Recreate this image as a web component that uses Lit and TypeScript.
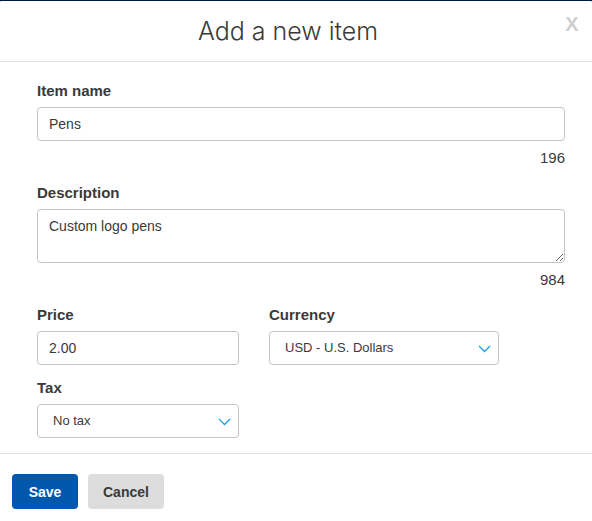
import { LitElement, html, css } from "lit";
import { customElement, state } from "lit/decorators.js";

const NAME_LIMIT = 200;
const DESCRIPTION_LIMIT = 1000;

@customElement("app-root")
export class AppRoot extends LitElement {
  static styles = css`
    :host {
      display: block;
      min-height: 100vh;
      box-sizing: border-box;
      padding-top: 1px;
      background: linear-gradient(#001a3d 8px, #ffffff 8px);
      color: #3a3a3a;
      font-family: "Liberation Sans", Arial, Helvetica, sans-serif;
    }
    * {
      box-sizing: border-box;
    }
    .dialog {
      background: #ffffff;
      border-radius: 1px;
    }
    .header {
      position: relative;
      padding: 14px 56px 14px 40px;
      border-bottom: 1px solid #e0e0e0;
    }
    .title {
      margin: 0;
      font-family: Inter, "Liberation Sans", Arial, sans-serif;
      font-size: 25px;
      line-height: 32px;
      font-weight: 300;
      text-align: center;
    }
    .close {
      position: absolute;
      top: 8px;
      right: 8px;
      width: 24px;
      height: 30px;
      padding: 0;
      border: 0;
      background: none;
      color: #cfcfcf;
      font: bold 20px/30px "Liberation Sans", Arial, sans-serif;
      cursor: pointer;
    }
    .body {
      display: grid;
      grid-template-columns: 202fr 230fr 36fr;
      column-gap: 30px;
      padding: 19px 27px 15px 37px;
    }
    .field {
      display: flex;
      flex-direction: column;
      min-width: 0;
      margin-bottom: 13px;
    }
    .wide {
      grid-column: 1 / -1;
      margin-bottom: 15px;
    }
    .last {
      grid-column: 1;
      margin-bottom: 0;
    }
    .label {
      margin-bottom: 6px;
      font-size: 15px;
      line-height: 20px;
      font-weight: 700;
    }
    .control {
      display: block;
      width: 100%;
      height: 34px;
      margin: 0;
      padding: 0 11px;
      border: 1px solid #c4c4c4;
      border-radius: 4px;
      background: #ffffff;
      color: inherit;
      font-family: inherit;
      font-size: 14px;
      line-height: 20px;
      outline: none;
    }
    .control:focus {
      border-color: #009cde;
    }
    .area {
      height: 54px;
      padding: 6px 11px;
      resize: vertical;
    }
    .count {
      margin-top: 7px;
      font-size: 15px;
      line-height: 20px;
      text-align: right;
    }
    .picker {
      display: grid;
      align-items: center;
    }
    .picker > * {
      grid-area: 1 / 1;
    }
    .select {
      appearance: none;
      padding: 0 32px 0 15px;
      font-size: 13px;
      font-weight: 500;
    }
    .chevron {
      justify-self: end;
      margin-right: 8px;
      pointer-events: none;
    }
    .footer {
      display: flex;
      gap: 10px;
      padding: 20px 12px 12px;
      border-top: 1px solid #e0e0e0;
    }
    .button {
      min-width: 66px;
      height: 35px;
      padding: 0 15px;
      border: 0;
      border-radius: 4px;
      background: #dddddd;
      color: #3a3a3a;
      font: bold 14px/20px "Liberation Sans", Arial, sans-serif;
      cursor: pointer;
    }
    .primary {
      background: #0058ad;
      color: #ffffff;
    }
  `;

  @state() private name = "Pens";
  @state() private description = "Custom logo pens";

  private chevron() {
    return html`<svg class="chevron" width="14" height="12" viewBox="0 0 14 12" fill="none" aria-hidden="true">
      <path d="M2 4 L7.5 9.5 L13 4" stroke="#1a9fe3" stroke-width="1.3" />
    </svg>`;
  }

  render() {
    return html`
      <form class="dialog" role="dialog" aria-labelledby="title" @submit=${(e: Event) => e.preventDefault()}>
        <header class="header">
          <h1 class="title" id="title">Add a new item</h1>
          <button class="close" type="button" aria-label="Close">X</button>
        </header>
        <div class="body">
          <div class="field wide">
            <label class="label" for="name">Item name</label>
            <input
              class="control"
              id="name"
              type="text"
              maxlength=${NAME_LIMIT}
              .value=${this.name}
              @input=${(e: Event) => (this.name = (e.target as HTMLInputElement).value)}
            />
            <div class="count">${NAME_LIMIT - this.name.length}</div>
          </div>
          <div class="field wide">
            <label class="label" for="description">Description</label>
            <textarea
              class="control area"
              id="description"
              maxlength=${DESCRIPTION_LIMIT}
              .value=${this.description}
              @input=${(e: Event) => (this.description = (e.target as HTMLTextAreaElement).value)}
            ></textarea>
            <div class="count">${DESCRIPTION_LIMIT - this.description.length}</div>
          </div>
          <div class="field">
            <label class="label" for="price">Price</label>
            <input class="control" id="price" type="text" inputmode="decimal" value="2.00" />
          </div>
          <div class="field">
            <label class="label" for="currency">Currency</label>
            <div class="picker">
              <select class="control select" id="currency">
                <option>USD - U.S. Dollars</option>
              </select>
              ${this.chevron()}
            </div>
          </div>
          <div class="field last">
            <label class="label" for="tax">Tax</label>
            <div class="picker">
              <select class="control select" id="tax">
                <option>No tax</option>
              </select>
              ${this.chevron()}
            </div>
          </div>
        </div>
        <footer class="footer">
          <button class="button primary" type="submit">Save</button>
          <button class="button" type="button">Cancel</button>
        </footer>
      </form>
    `;
  }
}
